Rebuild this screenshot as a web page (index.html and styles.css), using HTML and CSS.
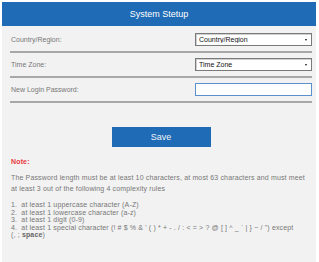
FILE: index.html
```html
<!DOCTYPE html>
<html>
<head>
    <title>System Stetup</title>
    <link rel="stylesheet" href="styles.css">
</head>
<body>
    <div class="panel">
        <div class="header">System Stetup</div>

        <form class="setup-form">
            <div class="row">
                <label for="country">Country/Region:</label>
                <div class="select-wrap">
                    <select id="country" name="country">
                        <option>Country/Region</option>
                    </select>
                    <span class="arrow"></span>
                </div>
            </div>

            <div class="row">
                <label for="timezone">Time Zone:</label>
                <div class="select-wrap">
                    <select id="timezone" name="timezone">
                        <option>Time Zone</option>
                    </select>
                    <span class="arrow"></span>
                </div>
            </div>

            <div class="row">
                <label for="password">New Login Password:</label>
                <input type="password" id="password" name="password">
            </div>

            <div class="actions">
                <button type="button" class="save-btn">Save</button>
            </div>
        </form>

        <div class="note">
            <div class="note-title">Note:</div>
            <p>The Password length must be at least 10 characters, at most 63 characters and must meet at least 3 out of the following 4 complexity rules</p>
            <ol>
                <li>at least 1 uppercase character (A-Z)</li>
                <li>at least 1 lowercase character (a-z)</li>
                <li>at least 1 digit (0-9)</li>
                <li>at least 1 special character (! # $ % &amp; ' ( ) * + - . / : &lt; = &gt; ? @ [ ] ^ _ ` | } ~ / ") except <span class="nowrap">(, ; <b>space</b>)</span></li>
            </ol>
        </div>
    </div>
</body>
</html>
```
FILE: styles.css
```css
body {
    font-family: 'Liberation Sans', Arial, sans-serif;
    font-size: 7px;
    margin: 0;
    padding: 2px 3px 0 2px;
    background-color: #fff;
}

.panel {
    background-color: #f2f2f2;
    min-height: 260px;
}

.header {
    height: 24px;
    line-height: 24px;
    background-color: #1f6bb5;
    color: #fff;
    text-align: center;
    font-size: 9px;
}

.setup-form {
    padding: 2px 4px 0 8px;
}

.row {
    display: flex;
    justify-content: space-between;
    align-items: center;
    height: 23px;
    border-bottom: 2px solid #a8a8a8;
}

label {
    color: #777;
    padding-left: 1px;
}

.select-wrap {
    position: relative;
    width: 117px;
    height: 13px;
}

select {
    appearance: none;
    -webkit-appearance: none;
    width: 117px;
    height: 13px;
    margin: 0;
    padding: 0 0 0 3px;
    border: 1px solid #7a7a7a;
    border-radius: 0;
    box-shadow: inset 1px 1px 0 #d0d0d0;
    background-color: #fff;
    color: #111;
    font-family: inherit;
    font-size: 7px;
}

.arrow {
    position: absolute;
    right: 5px;
    top: 6px;
    border-left: 1.5px solid transparent;
    border-right: 1.5px solid transparent;
    border-top: 2px solid #111;
}

input[type="password"] {
    width: 117px;
    height: 13px;
    margin: 0;
    padding: 0;
    box-sizing: border-box;
    border: 1px solid #5a90cc;
    background-color: #fff;
    outline: none;
}

.actions {
    text-align: center;
    padding-top: 24px;
}

.save-btn {
    width: 99px;
    height: 20px;
    border: none;
    background-color: #1f6bb5;
    color: #eef3fa;
    font-family: inherit;
    font-size: 9px;
    cursor: pointer;
}

.note {
    padding: 10px 5px 0 9px;
    color: #777;
    letter-spacing: 0.15px;
}

.note-title {
    color: #e8383d;
    font-weight: bold;
    line-height: 9px;
}

.note p {
    margin: 6px 0 0 0;
    line-height: 11px;
}

.note ol {
    margin: 7px 0 0 0;
    padding: 0;
    list-style-position: inside;
    line-height: 7.5px;
}

.note li::marker {
    content: counter(list-item) ".  ";
    white-space: pre;
}

.nowrap {
    white-space: nowrap;
}

.note b {
    color: #666;
}
```
